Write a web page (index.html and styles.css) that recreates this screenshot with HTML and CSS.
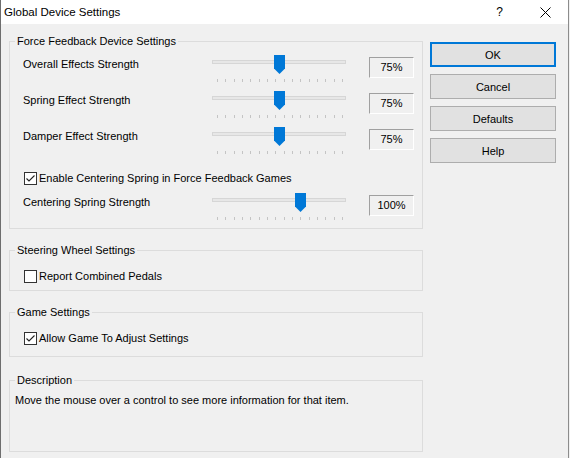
FILE: index.html
```html
<!DOCTYPE html>
<html>
<head>
<meta charset="utf-8">
<title>Global Device Settings</title>
<link rel="stylesheet" href="styles.css">
</head>
<body>
<div class="window">
  <div class="titlebar">
    <span class="title">Global Device Settings</span>
    <div class="tbtns">
      <span class="tbtn help">?</span>
      <span class="tbtn close"><svg width="11" height="11" viewBox="0 0 11 11"><path d="M0.5 0.5L10.5 10.5M10.5 0.5L0.5 10.5" stroke="#000" stroke-width="1" fill="none"/></svg></span>
    </div>
  </div>
  <div class="content">
    <div class="groups">
      <fieldset class="group ff">
        <legend>Force Feedback Device Settings</legend>
        <div class="rows">
          <div class="row">
            <span class="lbl">Overall Effects Strength</span>
            <div class="slider" style="--p:0.5">
              <div class="track"></div>
              <div class="ticks"><i></i><i></i><i></i><i></i><i></i><i></i><i></i><i></i><i></i><i></i><i></i><i></i><i></i><i></i><i></i><i></i></div>
              <svg class="thumb" width="11" height="19" viewBox="0 0 11 19"><path d="M0 0H11V13.5L5.5 19L0 13.5Z" fill="#0078d7"/></svg>
            </div>
            <span class="val">75%</span>
          </div>
          <div class="row">
            <span class="lbl">Spring Effect Strength</span>
            <div class="slider" style="--p:0.5">
              <div class="track"></div>
              <div class="ticks"><i></i><i></i><i></i><i></i><i></i><i></i><i></i><i></i><i></i><i></i><i></i><i></i><i></i><i></i><i></i><i></i></div>
              <svg class="thumb" width="11" height="19" viewBox="0 0 11 19"><path d="M0 0H11V13.5L5.5 19L0 13.5Z" fill="#0078d7"/></svg>
            </div>
            <span class="val">75%</span>
          </div>
          <div class="row">
            <span class="lbl">Damper Effect Strength</span>
            <div class="slider" style="--p:0.5">
              <div class="track"></div>
              <div class="ticks"><i></i><i></i><i></i><i></i><i></i><i></i><i></i><i></i><i></i><i></i><i></i><i></i><i></i><i></i><i></i><i></i></div>
              <svg class="thumb" width="11" height="19" viewBox="0 0 11 19"><path d="M0 0H11V13.5L5.5 19L0 13.5Z" fill="#0078d7"/></svg>
            </div>
            <span class="val">75%</span>
          </div>
          <div class="check cb-first">
            <span class="box"><svg width="11" height="11" viewBox="0 0 11 11"><path d="M1.5 5.5L4 8L9.5 2.5" stroke="#222" stroke-width="1.1" fill="none"/></svg></span>
            <span>Enable Centering Spring in Force Feedback Games</span>
          </div>
          <div class="row centering">
            <span class="lbl">Centering Spring Strength</span>
            <div class="slider" style="--p:0.6667">
              <div class="track"></div>
              <div class="ticks"><i></i><i></i><i></i><i></i><i></i><i></i><i></i><i></i><i></i><i></i><i></i><i></i><i></i><i></i><i></i><i></i></div>
              <svg class="thumb" width="11" height="19" viewBox="0 0 11 19"><path d="M0 0H11V13.5L5.5 19L0 13.5Z" fill="#0078d7"/></svg>
            </div>
            <span class="val">100%</span>
          </div>
        </div>
      </fieldset>

      <fieldset class="group steering">
        <legend>Steering Wheel Settings</legend>
        <div class="inner">
          <div class="check">
            <span class="box"></span>
            <span>Report Combined Pedals</span>
          </div>
        </div>
      </fieldset>

      <fieldset class="group game">
        <legend>Game Settings</legend>
        <div class="inner">
          <div class="check">
            <span class="box"><svg width="11" height="11" viewBox="0 0 11 11"><path d="M1.5 5.5L4 8L9.5 2.5" stroke="#222" stroke-width="1.1" fill="none"/></svg></span>
            <span>Allow Game To Adjust Settings</span>
          </div>
        </div>
      </fieldset>

      <fieldset class="group desc">
        <legend>Description</legend>
        <p class="desc-text">Move the mouse over a control to see more information for that item.</p>
      </fieldset>
    </div>

    <div class="buttons">
      <button class="btn default">OK</button>
      <button class="btn">Cancel</button>
      <button class="btn">Defaults</button>
      <button class="btn">Help</button>
    </div>
  </div>
</div>
</body>
</html>
```

FILE: styles.css
```css
html, body {
  margin: 0;
  padding: 0;
}
body {
  background: #f0f0f0;
  font-family: "Liberation Sans", Arial, sans-serif;
  font-size: 11px;
  color: #000;
}
.window {
  box-sizing: border-box;
  width: 569px;
  height: 458px;
  background: #f0f0f0;
  border-left: 1px solid #6e6e6e;
  border-right: 1px solid #8c8c8c;
}
.titlebar {
  height: 24px;
  background: #fff;
  display: flex;
  align-items: center;
}
.title {
  padding-left: 3px;
  font-size: 11.5px;
}
.tbtns {
  margin-left: auto;
  display: flex;
  height: 24px;
}
.tbtn {
  width: 45px;
  height: 24px;
  display: flex;
  align-items: center;
  justify-content: center;
}
.tbtn.help {
  font-size: 12px;
  padding-right: 2px;
  box-sizing: border-box;
}
.content {
  display: flex;
  align-items: flex-start;
  padding: 9px 0 0 8px;
  gap: 7px;
}
.groups {
  width: 414px;
  display: flex;
  flex-direction: column;
}
.group {
  margin: 0;
  padding: 0;
  border: 1px solid #dcdcdc;
  min-width: 0;
}
.group legend {
  margin-left: 5px;
  padding: 0 2px;
  line-height: 16px;
}
.rows {
  padding: 4px 0 1px 13px;
}
.row {
  display: grid;
  grid-template-columns: 189px 134px 23px 45px;
  height: 36px;
}
.row .val {
  grid-column: 4;
}
.lbl {
  padding-top: 3px;
  line-height: 16px;
}
.slider {
  position: relative;
  height: 36px;
}
.track {
  margin-top: 7px;
  height: 2px;
  border: 1px solid #d6d6d6;
  background: #e7e7e7;
}
.ticks {
  margin: 15px 0 0 5px;
  width: 126px;
  height: 3px;
  display: flex;
  justify-content: space-between;
}
.ticks i {
  width: 1px;
  height: 3px;
  background: #c4c4c4;
}
.thumb {
  position: absolute;
  top: 2px;
  left: calc(var(--p) * 125px - 0.5px);
}
.val {
  box-sizing: border-box;
  margin-top: 4px;
  height: 21px;
  border-top: 1px solid #a0a0a0;
  border-left: 1px solid #a0a0a0;
  border-right: 1px solid #ffffff;
  border-bottom: 1px solid #ffffff;
  text-align: center;
  line-height: 19px;
}
.check {
  display: flex;
  align-items: center;
  height: 16px;
  line-height: 16px;
  margin-left: 1px;
  gap: 2px;
}
.box {
  box-sizing: border-box;
  width: 13px;
  height: 13px;
  border: 1px solid #333;
  background: #fff;
  display: flex;
}
.cb-first {
  margin-top: 9px;
}
.centering {
  margin-top: 5px;
}
.steering {
  margin-top: 13px;
}
.game {
  margin-top: 13px;
}
.inner {
  padding-left: 14px;
}
.steering .inner {
  padding-top: 10px;
  padding-bottom: 6px;
}
.game .inner {
  padding-top: 10px;
  padding-bottom: 10px;
}
.group .inner .check {
  margin-left: 0;
}
.desc {
  margin-top: 15px;
}
.desc-text {
  margin: 0;
  padding: 4px 0 43px 5px;
  line-height: 16px;
}
.buttons {
  margin-top: 9px;
  display: flex;
  flex-direction: column;
  gap: 7px;
}
.btn {
  box-sizing: border-box;
  width: 126px;
  height: 25px;
  margin: 0;
  padding: 0;
  background: #e1e1e1;
  border: 1px solid #adadad;
  font-family: inherit;
  font-size: 11px;
  color: #000;
}
.btn.default {
  border: 2px solid #0078d7;
}
```
